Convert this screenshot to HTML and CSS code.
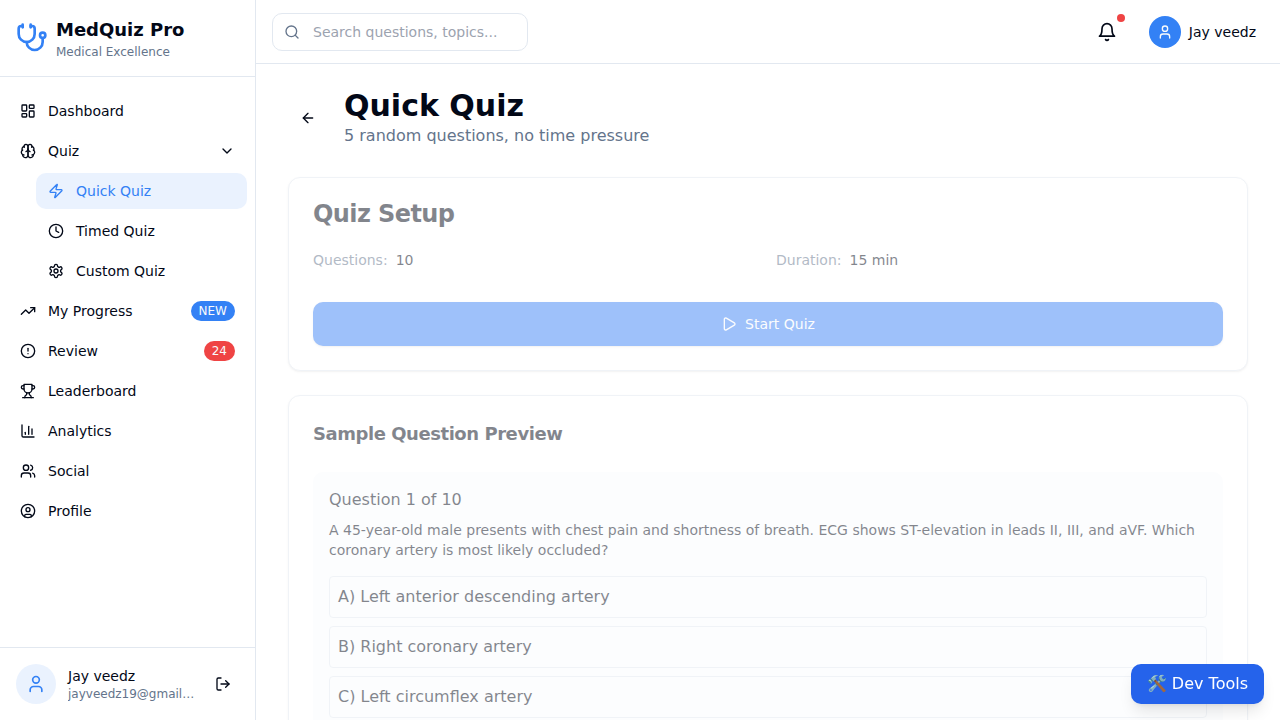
FILE: index.html
```
<!DOCTYPE html>
<html lang="en">
<head>
<meta charset="utf-8">
<title>MedQuiz Pro</title>
<link rel="stylesheet" href="styles.css">
</head>
<body>
<div class="app">
  <aside class="sidebar">
    <div class="brand">
      <svg class="icon brand-icon" viewBox="0 0 24 24"><path d="M11 2v2"/><path d="M5 2v2"/><path d="M5 3H4a2 2 0 0 0-2 2v4a6 6 0 0 0 12 0V5a2 2 0 0 0-2-2h-1"/><path d="M8 15a6 6 0 0 0 12 0v-3"/><circle cx="20" cy="10" r="2"/></svg>
      <div>
        <div class="brand-name">MedQuiz Pro</div>
        <div class="brand-sub">Medical Excellence</div>
      </div>
    </div>
    <nav class="nav">
      <a class="nav-item"><svg class="icon" viewBox="0 0 24 24"><rect width="7" height="9" x="3" y="3" rx="1"/><rect width="7" height="5" x="14" y="3" rx="1"/><rect width="7" height="9" x="14" y="12" rx="1"/><rect width="7" height="5" x="3" y="16" rx="1"/></svg><span class="label">Dashboard</span></a>
      <a class="nav-item"><svg class="icon" viewBox="0 0 24 24"><path d="M12 5a3 3 0 1 0-5.997.125 4 4 0 0 0-2.526 5.77 4 4 0 0 0 .556 6.588A4 4 0 1 0 12 18Z"/><path d="M12 5a3 3 0 1 1 5.997.125 4 4 0 0 1 2.526 5.77 4 4 0 0 1-.556 6.588A4 4 0 1 1 12 18Z"/><path d="M15 13a4.5 4.5 0 0 1-3-4 4.5 4.5 0 0 1-3 4"/><path d="M17.599 6.5a3 3 0 0 0 .399-1.375"/><path d="M6.003 5.125A3 3 0 0 0 6.401 6.5"/><path d="M3.477 10.896a4 4 0 0 1 .585-.396"/><path d="M19.938 10.5a4 4 0 0 1 .585.396"/><path d="M6 18a4 4 0 0 1-1.967-.516"/><path d="M19.967 17.484A4 4 0 0 1 18 18"/></svg><span class="label">Quiz</span><svg class="icon" viewBox="0 0 24 24"><path d="m6 9 6 6 6-6"/></svg></a>
      <div class="subnav">
        <a class="nav-item active"><svg class="icon" viewBox="0 0 24 24"><path d="M4 14a1 1 0 0 1-.78-1.63l9.9-10.2a.5.5 0 0 1 .86.46l-1.92 6.02A1 1 0 0 0 13 10h7a1 1 0 0 1 .78 1.63l-9.9 10.2a.5.5 0 0 1-.86-.46l1.92-6.02A1 1 0 0 0 11 14z"/></svg><span class="label">Quick Quiz</span></a>
        <a class="nav-item"><svg class="icon" viewBox="0 0 24 24"><circle cx="12" cy="12" r="10"/><path d="M12 6v6l4 2"/></svg><span class="label">Timed Quiz</span></a>
        <a class="nav-item"><svg class="icon" viewBox="0 0 24 24"><path d="M12.22 2h-.44a2 2 0 0 0-2 2v.18a2 2 0 0 1-1 1.73l-.43.25a2 2 0 0 1-2 0l-.15-.08a2 2 0 0 0-2.73.73l-.22.38a2 2 0 0 0 .73 2.73l.15.1a2 2 0 0 1 1 1.72v.51a2 2 0 0 1-1 1.74l-.15.09a2 2 0 0 0-.73 2.73l.22.38a2 2 0 0 0 2.73.73l.15-.08a2 2 0 0 1 2 0l.43.25a2 2 0 0 1 1 1.73V20a2 2 0 0 0 2 2h.44a2 2 0 0 0 2-2v-.18a2 2 0 0 1 1-1.73l.43-.25a2 2 0 0 1 2 0l.15.08a2 2 0 0 0 2.73-.73l.22-.39a2 2 0 0 0-.73-2.73l-.15-.08a2 2 0 0 1-1-1.74v-.5a2 2 0 0 1 1-1.74l.15-.09a2 2 0 0 0 .73-2.73l-.22-.38a2 2 0 0 0-2.73-.73l-.15.08a2 2 0 0 1-2 0l-.43-.25a2 2 0 0 1-1-1.73V4a2 2 0 0 0-2-2z"/><circle cx="12" cy="12" r="3"/></svg><span class="label">Custom Quiz</span></a>
      </div>
      <a class="nav-item"><svg class="icon" viewBox="0 0 24 24"><path d="M22 7 13.5 15.5 8.5 10.5 2 17"/><path d="M16 7h6v6"/></svg><span class="label">My Progress</span><span class="badge">NEW</span></a>
      <a class="nav-item"><svg class="icon" viewBox="0 0 24 24"><circle cx="12" cy="12" r="10"/><path d="M12 8v4"/><path d="M12 16h.01"/></svg><span class="label">Review</span><span class="badge danger">24</span></a>
      <a class="nav-item"><svg class="icon" viewBox="0 0 24 24"><path d="M6 9H4.5a2.5 2.5 0 0 1 0-5H6"/><path d="M18 9h1.5a2.5 2.5 0 0 0 0-5H18"/><path d="M4 22h16"/><path d="M10 14.66V17c0 .55-.47.98-.97 1.21C7.85 18.75 7 20.24 7 22"/><path d="M14 14.66V17c0 .55.47.98.97 1.21C16.15 18.75 17 20.24 17 22"/><path d="M18 2H6v7a6 6 0 0 0 12 0V2Z"/></svg><span class="label">Leaderboard</span></a>
      <a class="nav-item"><svg class="icon" viewBox="0 0 24 24"><path d="M3 3v16a2 2 0 0 0 2 2h16"/><path d="M18 17V9"/><path d="M13 17V5"/><path d="M8 17v-3"/></svg><span class="label">Analytics</span></a>
      <a class="nav-item"><svg class="icon" viewBox="0 0 24 24"><path d="M16 21v-2a4 4 0 0 0-4-4H6a4 4 0 0 0-4 4v2"/><circle cx="9" cy="7" r="4"/><path d="M22 21v-2a4 4 0 0 0-3-3.87"/><path d="M16 3.13a4 4 0 0 1 0 7.75"/></svg><span class="label">Social</span></a>
      <a class="nav-item"><svg class="icon" viewBox="0 0 24 24"><circle cx="12" cy="12" r="10"/><circle cx="12" cy="10" r="3"/><path d="M7 20.662V19a2 2 0 0 1 2-2h6a2 2 0 0 1 2 2v1.662"/></svg><span class="label">Profile</span></a>
    </nav>
    <div class="account">
      <div class="avatar soft"><svg class="icon icon-md" viewBox="0 0 24 24"><path d="M19 21v-2a4 4 0 0 0-4-4H9a4 4 0 0 0-4 4v2"/><circle cx="12" cy="7" r="4"/></svg></div>
      <div class="account-text">
        <div class="account-name">Jay veedz</div>
        <div class="account-mail">jayveedz19@gmail.com</div>
      </div>
      <button class="logout"><svg class="icon" viewBox="0 0 24 24"><path d="M9 21H5a2 2 0 0 1-2-2V5a2 2 0 0 1 2-2h4"/><path d="m16 17 5-5-5-5"/><path d="M21 12H9"/></svg></button>
    </div>
  </aside>
  <div class="content">
    <header class="topbar">
      <div class="search">
        <svg class="icon" viewBox="0 0 24 24"><circle cx="11" cy="11" r="8"/><path d="m21 21-4.3-4.3"/></svg>
        <input class="search-input" type="text" placeholder="Search questions, topics...">
      </div>
      <div class="top-actions">
        <button class="bell"><svg class="icon icon-md" viewBox="0 0 24 24"><path d="M10.3 21a1.94 1.94 0 0 0 3.4 0"/><path d="M6 8a6 6 0 0 1 12 0c0 7 3 9 3 9H3s3-2 3-9"/></svg><span class="dot"></span></button>
        <div class="user">
          <div class="avatar solid"><svg class="icon" viewBox="0 0 24 24"><path d="M19 21v-2a4 4 0 0 0-4-4H9a4 4 0 0 0-4 4v2"/><circle cx="12" cy="7" r="4"/></svg></div>
          <span>Jay veedz</span>
        </div>
      </div>
    </header>
    <main class="main">
      <div class="page-head">
        <button class="back"><svg class="icon" viewBox="0 0 24 24"><path d="m12 19-7-7 7-7"/><path d="M19 12H5"/></svg></button>
        <div>
          <h1 class="title">Quick Quiz</h1>
          <p class="subtitle">5 random questions, no time pressure</p>
        </div>
      </div>
      <div class="cards">
        <section class="card setup">
          <h2 class="setup-title">Quiz Setup</h2>
          <div class="facts">
            <div class="fact"><span class="muted">Questions:</span><span>10</span></div>
            <div class="fact"><span class="muted">Duration:</span><span>15 min</span></div>
          </div>
          <button class="start"><svg class="icon" viewBox="0 0 24 24"><path d="M5 5a2 2 0 0 1 3.008-1.728l11.997 6.998a2 2 0 0 1 .003 3.458l-12 7A2 2 0 0 1 5 19z"/></svg>Start Quiz</button>
        </section>
        <section class="card preview">
          <h3 class="preview-title">Sample Question Preview</h3>
          <div class="question">
            <div class="question-no">Question 1 of 10</div>
            <p class="question-text">A 45-year-old male presents with chest pain and shortness of breath. ECG shows ST-elevation in leads II, III, and aVF. Which coronary artery is most likely occluded?</p>
            <div class="options">
              <div class="option">A) Left anterior descending artery</div>
              <div class="option">B) Right coronary artery</div>
              <div class="option">C) Left circumflex artery</div>
            </div>
          </div>
        </section>
      </div>
    </main>
  </div>
</div>
<button class="dev-tools">🛠️ Dev Tools</button>
</body>
</html>
```
FILE: styles.css
```
* { box-sizing: border-box; margin: 0; padding: 0; }
:root {
  --ink: #020817;
  --muted: #64748b;
  --line: #e2e8f0;
  --primary: #3381f5;
}
body {
  font-family: "DejaVu Sans", sans-serif;
  font-size: 16px;
  line-height: 24px;
  color: var(--ink);
  background: #fff;
  overflow: hidden;
}
button { font: inherit; color: inherit; background: none; border: 0; }
.icon {
  width: 16px;
  height: 16px;
  flex: none;
  fill: none;
  stroke: currentColor;
  stroke-width: 2;
  stroke-linecap: round;
  stroke-linejoin: round;
}
.icon-md { width: 20px; height: 20px; }
.app { display: flex; height: 100vh; }

.sidebar {
  width: 256px;
  flex: none;
  display: flex;
  flex-direction: column;
  border-right: 1px solid var(--line);
}
.brand {
  display: flex;
  align-items: center;
  gap: 8px;
  padding: 16px;
  border-bottom: 1px solid var(--line);
}
.brand-icon { width: 32px; height: 32px; color: var(--primary); }
.brand-name { font-size: 18px; line-height: 28px; font-weight: 700; }
.brand-sub { font-size: 12px; line-height: 16px; color: var(--muted); }
.nav {
  flex: 1;
  display: flex;
  flex-direction: column;
  gap: 4px;
  padding: 16px 8px;
}
.subnav { display: flex; flex-direction: column; gap: 4px; padding-left: 28px; }
.nav-item {
  display: flex;
  align-items: center;
  gap: 12px;
  height: 36px;
  padding: 0 12px;
  border-radius: 10px;
  font-size: 14px;
  line-height: 20px;
}
.nav-item.active { background: #eaf2fe; color: var(--primary); }
.label { flex: 1; }
.badge {
  padding: 2px 8px;
  border-radius: 10px;
  font-size: 12px;
  line-height: 16px;
  color: #f8fafc;
  background: var(--primary);
}
.badge.danger { background: #ef4444; }
.account {
  display: flex;
  align-items: center;
  gap: 12px;
  padding: 16px;
  border-top: 1px solid var(--line);
}
.avatar {
  flex: none;
  display: grid;
  place-items: center;
  border-radius: 50%;
}
.avatar.soft { width: 40px; height: 40px; color: var(--primary); background: #eaf2fe; }
.avatar.solid { width: 32px; height: 32px; color: #f8fafc; background: var(--primary); }
.account-text { flex: 1; min-width: 0; }
.account-name { font-size: 14px; line-height: 20px; }
.account-mail {
  font-size: 12px;
  line-height: 16px;
  color: var(--muted);
  white-space: nowrap;
  overflow: hidden;
  text-overflow: ellipsis;
}
.logout { display: grid; place-items: center; width: 32px; height: 36px; }

.content { flex: 1; min-width: 0; display: flex; flex-direction: column; }
.topbar {
  flex: none;
  display: flex;
  align-items: center;
  justify-content: space-between;
  height: 64px;
  padding: 0 24px 0 16px;
  border-bottom: 1px solid var(--line);
}
.search {
  display: flex;
  align-items: center;
  gap: 13px;
  width: 256px;
  height: 38px;
  padding: 0 11px;
  border: 1px solid var(--line);
  border-radius: 10px;
  color: var(--muted);
}
.search-input {
  flex: 1;
  min-width: 0;
  border: 0;
  outline: 0;
  background: none;
  font: 14px/20px "DejaVu Sans", sans-serif;
}
.search-input::placeholder { color: #9ca3af; }
.top-actions { display: flex; align-items: center; gap: 24px; font-size: 14px; line-height: 20px; }
.bell { position: relative; display: grid; place-items: center; width: 36px; height: 36px; }
.dot {
  position: absolute;
  top: 0;
  right: 0;
  width: 8px;
  height: 8px;
  border-radius: 50%;
  background: #ef4444;
}
.user { display: flex; align-items: center; gap: 8px; }

.main { flex: 1; min-height: 0; overflow: hidden; padding: 24px 32px; }
.page-head { display: flex; align-items: center; gap: 16px; }
.back { display: grid; place-items: center; width: 40px; height: 40px; }
.title { font-size: 30px; line-height: 36px; font-weight: 700; }
.subtitle { color: var(--muted); }
.cards {
  display: flex;
  flex-direction: column;
  gap: 24px;
  padding-top: 29px;
}
.card {
  opacity: 0.49;
  padding: 24px;
  border: 1px solid var(--line);
  border-radius: 12px;
  background: #fff;
  box-shadow: 0 1px 2px rgba(0, 0, 0, 0.1);
}
.setup-title {
  font-size: 24px;
  line-height: 24px;
  letter-spacing: -0.6px;
  margin-bottom: 24px;
}
.facts {
  display: grid;
  grid-template-columns: 1fr 1fr;
  gap: 16px;
  font-size: 14px;
  line-height: 20px;
  margin-bottom: 32px;
}
.fact { display: flex; gap: 8px; }
.muted { color: var(--muted); }
.start {
  display: flex;
  align-items: center;
  justify-content: center;
  gap: 8px;
  width: 100%;
  height: 44px;
  border-radius: 10px;
  font-size: 14px;
  color: #f8fafc;
  background: #3b82f6;
  box-shadow: 0 1px 2px rgba(0, 0, 0, 0.1);
}
.preview-title { font-size: 18px; line-height: 28px; letter-spacing: -0.45px; margin-bottom: 24px; }
.question { padding: 16px; border-radius: 10px; background: #f9fbfe; }
.question-no { margin-bottom: 8px; }
.question-text { font-size: 14px; line-height: 20px; margin-bottom: 16px; }
.options { display: flex; flex-direction: column; gap: 8px; }
.option { padding: 8px; border: 1px solid var(--line); border-radius: 4px; }

.dev-tools {
  position: fixed;
  right: 16px;
  bottom: 16px;
  padding: 8px 16px;
  border-radius: 10px;
  color: #fff;
  background: #2563eb;
  box-shadow: 0 10px 15px -3px rgba(0, 0, 0, 0.1), 0 4px 6px -4px rgba(0, 0, 0, 0.1);
}
```
